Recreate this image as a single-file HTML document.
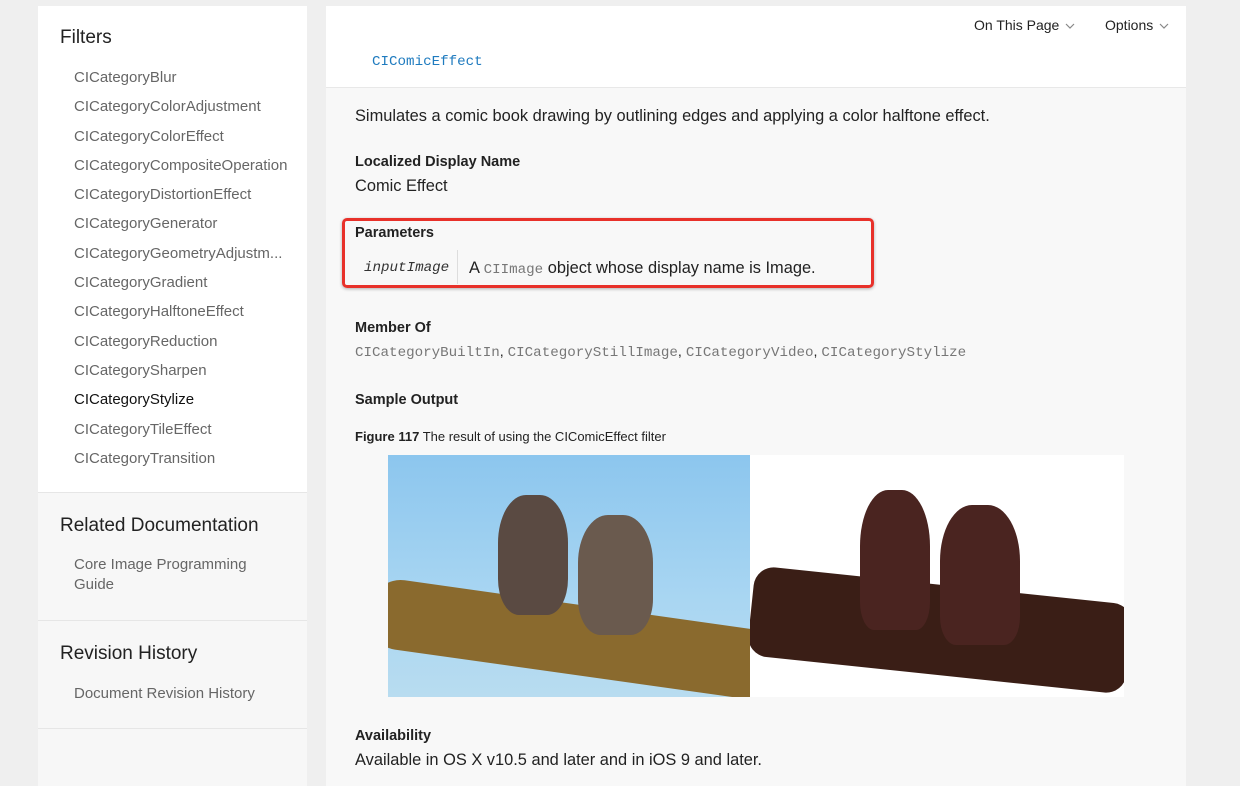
<!DOCTYPE html>
<html><head><meta charset="utf-8"><style>
*{margin:0;padding:0;box-sizing:border-box}
body{width:1240px;height:778px;overflow:hidden;background:#efefef;font-family:"Liberation Sans",Arial,sans-serif;position:relative}
.side{position:absolute;left:38px;top:6px;width:269px;height:780px;background:#f7f7f7}
.sec1{background:#fff;height:487px;padding:21px 0 0 22px;border-bottom:1px solid #e6e6e6}
.h{font-size:19px;color:#222}
.item{font-size:15px;color:#666;margin-left:14px;height:29.3px;line-height:29.3px;white-space:nowrap}
.item.sel{color:#111}
.sec{padding:22px 0 0 22px;border-bottom:1px solid #e6e6e6}
.main{position:absolute;left:326px;top:6px;width:860px;height:780px;background:#f8f8f8}
.top{height:82px;background:#fff;border-bottom:1px solid #e8e8e8;position:relative}
.mono{font-family:"Liberation Mono","DejaVu Sans Mono",monospace}
.t{position:absolute;left:46px;top:48px;color:#1f7bbf;font-size:14.2px}
.nav{position:absolute;top:11px;font-size:14px;color:#222}
.nav svg{margin-left:6px;vertical-align:middle}
.c{position:absolute;left:29px;font-size:16.4px;color:#222}
.b{font-weight:bold;font-size:14.5px}
.g{color:#777;font-size:14.2px}
</style></head><body>
<div class="side">
 <div class="sec1"><div class="h" style="margin-bottom:14px">Filters</div>
 <div class="item">CICategoryBlur</div><div class="item">CICategoryColorAdjustment</div><div class="item">CICategoryColorEffect</div><div class="item">CICategoryCompositeOperation</div><div class="item">CICategoryDistortionEffect</div><div class="item">CICategoryGenerator</div><div class="item">CICategoryGeometryAdjustm...</div><div class="item">CICategoryGradient</div><div class="item">CICategoryHalftoneEffect</div><div class="item">CICategoryReduction</div><div class="item">CICategorySharpen</div><div class="item sel">CICategoryStylize</div><div class="item">CICategoryTileEffect</div><div class="item">CICategoryTransition</div></div>
 <div class="sec" style="height:128px"><div class="h">Related Documentation</div><div class="item" style="line-height:20px;height:auto;white-space:normal;margin-top:18px;width:200px">Core Image Programming Guide</div></div>
 <div class="sec" style="height:108px"><div class="h">Revision History</div><div class="item" style="margin-top:14px">Document Revision History</div></div>
</div>
<div class="main">
 <div class="top"><div class="t mono">CIComicEffect</div>
 <div class="nav" style="left:648px">On This Page<svg width="10" height="6" viewBox="0 0 10 6"><path d="M1 1l4 4 4-4" fill="none" stroke="#888" stroke-width="1.2"/></svg></div>
 <div class="nav" style="left:779px">Options<svg width="10" height="6" viewBox="0 0 10 6"><path d="M1 1l4 4 4-4" fill="none" stroke="#888" stroke-width="1.2"/></svg></div></div>
 <div class="c" style="top:101px">Simulates a comic book drawing by outlining edges and applying a color halftone effect.</div>
 <div class="c b" style="top:148px">Localized Display Name</div>
 <div class="c" style="top:171px">Comic Effect</div>
 <div style="position:absolute;left:16px;top:212px;width:532px;height:70px;border:3px solid #e8312a;border-radius:5px;box-shadow:0 1px 3px rgba(0,0,0,.3)"></div>
 <div class="c b" style="top:219px">Parameters</div>
 <div style="position:absolute;left:131px;top:244px;width:1px;height:34px;background:#ddd"></div>
 <div class="mono" style="position:absolute;left:38px;top:254px;font-size:14.2px;font-style:italic;color:#333">inputImage</div>
 <div class="c" style="left:143px;top:253px">A <span class="mono g">CIImage</span> object whose display name is Image.</div>
 <div class="c b" style="top:314px">Member Of</div>
 <div class="c mono g" style="top:338px">CICategoryBuiltIn<span style="color:#222;font-family:'Liberation Sans'">, </span>CICategoryStillImage<span style="color:#222;font-family:'Liberation Sans'">, </span>CICategoryVideo<span style="color:#222;font-family:'Liberation Sans'">, </span>CICategoryStylize</div>
 <div class="c b" style="top:386px">Sample Output</div>
 <div class="c" style="top:423px;font-size:13px"><b>Figure 117</b> The result of using the CIComicEffect filter</div>
 <div style="position:absolute;left:62px;top:449px;width:362px;height:242px;background:linear-gradient(#8cc6ee,#a9d6f2 60%,#b8dcf0);overflow:hidden">
  <div style="position:absolute;left:-20px;top:150px;width:420px;height:70px;background:#8a6a2e;transform:rotate(8deg);border-radius:30px"></div>
  <div style="position:absolute;left:110px;top:40px;width:70px;height:120px;background:#5a4a42;border-radius:40% 40% 30% 30%"></div>
  <div style="position:absolute;left:190px;top:60px;width:75px;height:120px;background:#6a5a4e;border-radius:40% 40% 30% 30%"></div>
 </div>
 <div style="position:absolute;left:424px;top:449px;width:374px;height:242px;background:#fff;overflow:hidden">
  <div style="position:absolute;left:0;top:130px;width:380px;height:90px;background:#3a1e16;transform:rotate(6deg);border-radius:20px"></div>
  <div style="position:absolute;left:110px;top:35px;width:70px;height:140px;background:#4a2420;border-radius:40% 40% 20% 20%"></div>
  <div style="position:absolute;left:190px;top:50px;width:80px;height:140px;background:#4a2420;border-radius:40% 40% 20% 20%"></div>
 </div>
 <div class="c b" style="top:722px">Availability</div>
 <div class="c" style="top:745px">Available in OS X v10.5 and later and in iOS 9 and later.</div>
</div>
</body></html>
